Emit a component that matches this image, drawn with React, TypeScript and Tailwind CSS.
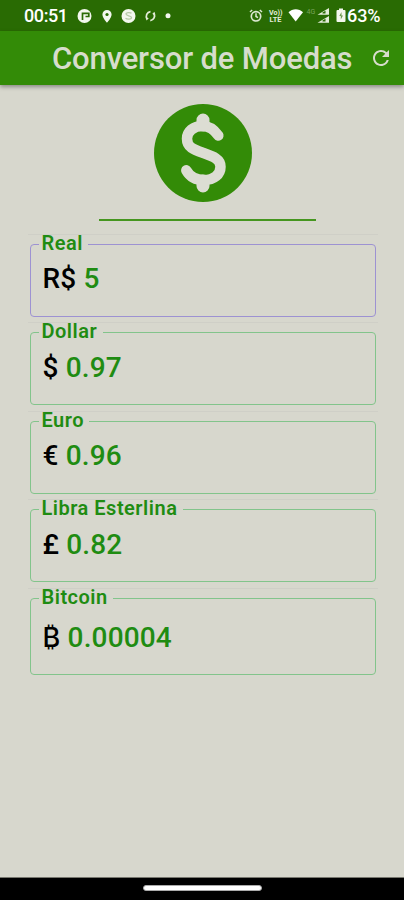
import React from "react";

type Currency = {
  label: string;
  symbol: string;
  symbolStyle: string;
  value: string;
  legendWidth: string;
  wrap: string;
  box: string;
  row: string;
};

const currencies: Currency[] = [
  { label: "Real", symbol: "R$", symbolStyle: "", value: "5", legendWidth: "w-[49px]", wrap: "", box: "h-[82px] border-[#9d92d2]", row: "pt-[7px]" },
  { label: "Dollar", symbol: "$", symbolStyle: "", value: "0.97", legendWidth: "w-[64px]", wrap: "mt-[5px]", box: "h-[82px] border-[#82c48b]", row: "pt-[8px]" },
  { label: "Euro", symbol: "€", symbolStyle: "", value: "0.96", legendWidth: "w-[50px]", wrap: "mt-[6px]", box: "h-[82px] border-[#82c48b]", row: "pt-[7px]" },
  { label: "Libra Esterlina", symbol: "£", symbolStyle: "", value: "0.82", legendWidth: "w-[144px]", wrap: "mt-[5px]", box: "h-[82px] border-[#82c48b]", row: "pt-[8px]" },
  { label: "Bitcoin", symbol: "₿", symbolStyle: "inline-block w-[18px] font-[Inter,sans-serif] text-[27px]", value: "0.00004", legendWidth: "w-[74px]", wrap: "mt-[6px]", box: "h-[86px] border-[#82c48b]", row: "pt-[12px]" },
];

function LeftStatusIcons() {
  return (
    <svg className="ml-[9px] h-[20px] w-[98px]" viewBox="0 0 98 20" fill="none">
      <circle cx="7.500" cy="10" r="7" fill="#f3f7ee" />
      <path d="M5.500 14V7.300h6.300v3.200H8.500" stroke="#296b03" strokeWidth="1.700" />
      <path d="M30 4a4.600 4.600 0 0 0-4.600 4.600c0 3.400 4.600 8.200 4.600 8.200s4.600-4.800 4.600-8.200A4.600 4.600 0 0 0 30 4z" fill="#f3f7ee" />
      <circle cx="30" cy="8.500" r="1.600" fill="#296b03" />
      <circle cx="51.500" cy="10" r="7" fill="#f3f7ee" />
      <path d="M54.500 7.300c-1-1-5.500-1.200-5.500.8s5.500 1.400 5.500 3.500-4.500 1.900-6 .7" stroke="#b5c9a7" strokeWidth="1.300" />
      <path d="M73.500 5.700a4.600 4.600 0 0 0-3.300 7.300M73.300 14.600a4.600 4.600 0 0 0 3.400-7.200" stroke="#e4edda" strokeWidth="1.700" />
      <path d="m68.500 11.500 3.300.7-2.200 2.200zM78.500 8.700l-3.300-.7 2.200-2.200z" fill="#e4edda" />
      <circle cx="91" cy="9.700" r="2.500" fill="#f3f7ee" />
    </svg>
  );
}

function RightStatusIcons() {
  return (
    <svg className="h-[20px] w-[98px]" viewBox="249 6 98 20" fill="none">
      <circle cx="256" cy="16.300" r="4.700" stroke="#dce8d1" strokeWidth="1.700" />
      <path d="M256 13.300v3.200l2 1.200M250 12l2.200-2M262 12l-2.200-2" stroke="#dce8d1" strokeWidth="1.500" />
      <text x="269" y="14.800" fontFamily="Roboto, sans-serif" fontSize="6.500" fontWeight="700" fill="#e4edda" textLength="13.500" lengthAdjust="spacingAndGlyphs">Vo))</text>
      <text x="269.500" y="21.500" fontFamily="Roboto, sans-serif" fontSize="6.500" fontWeight="700" fill="#e4edda" textLength="12" lengthAdjust="spacingAndGlyphs">LTE</text>
      <path d="M288.500 12.200c4-4 10.500-4 14.500 0L295.700 21.500z" fill="#fff" />
      <text x="306.500" y="13.500" fontFamily="Roboto, sans-serif" fontSize="7" fill="#78a35d">4G</text>
      <path d="M317.500 14.800 329 8v6.800zM317.500 22.800 329 16v6.800z" fill="#e4edda" />
      <path d="M322.500 13.600v-1l3-1.800v2.800zM322.500 21.600v-1l3-1.800v2.800z" fill="#296b03" />
      <path d="M339 8.500h4V10h1.500q1 0 1 1v10q0 1-1 1h-7q-1 0-1-1V11q0-1 1-1h1.500z" fill="#f3f7ee" />
      <path d="m341.500 12-2.200 4h1.500v3.500l2.200-4h-1.500z" fill="#6b9850" />
    </svg>
  );
}

function DollarCoin() {
  return (
    <svg className="ml-px h-[98px] w-[98px]" viewBox="0 0 98 98" fill="none" strokeLinecap="round" strokeLinejoin="round">
      <circle cx="49" cy="49" r="49" fill="#338b07" />
      <path
        d="M64.300 31.500C59.500 24.700 54 22 48.500 22C39.500 22 33 27.500 33 34.700C33 43.500 40 45.700 49.500 49C59.500 52.500 66.500 55 66.500 62.700C66.500 70.500 60 76 50 76C41.500 76 35.800 72.500 32.300 66.300"
        stroke="#dcddd3"
        strokeWidth="10.500"
      />
      <path d="M49 16v5M49 77v5" stroke="#dcddd3" strokeWidth="13" />
    </svg>
  );
}

function CurrencyField({ item }: { item: Currency }) {
  return (
    <div className={`border-t border-[#cfcfc7] ${item.wrap}`}>
      <fieldset className={`mx-0.5 w-[346px] rounded-[4px] border-[1.5px] pl-[8px] ${item.box}`}>
        <legend className={`whitespace-nowrap pb-[2px] pl-[3px] text-[20px] leading-[16px] font-semibold tracking-[0.5px] text-[#1f8c12] ${item.legendWidth}`}>
          {item.label}
        </legend>
        <div className={`pl-[4px] text-[28px] leading-[38px] font-medium tracking-[0.15px] whitespace-pre ${item.row}`}>
          <span className={`text-black ${item.symbolStyle}`}>{item.symbol}</span>
          <span className="text-[#1f8c12]"> {item.value}</span>
        </div>
      </fieldset>
    </div>
  );
}

export default function App() {
  return (
    <div className="flex h-[900px] w-[404px] flex-col overflow-hidden bg-[#d7d7cd] font-[Roboto,sans-serif]">
      <div className="flex h-[31px] shrink-0 items-center bg-[#296b03] pl-[24px] pr-[22px] text-white">
        <span className="w-[44px] text-[18px] font-medium tracking-[-0.4px]">00:51</span>
        <LeftStatusIcons />
        <div className="ml-auto flex items-center">
          <RightStatusIcons />
          <span className="w-[35px] text-[18px] font-medium tracking-[-0.1px]">63%</span>
        </div>
      </div>

      <header className="z-10 flex h-[54px] shrink-0 items-center justify-between bg-[#338b07] pl-[52px] pr-[11px] shadow-[0_2px_4px_rgba(0,0,0,0.35)]">
        <h1 className="pt-px text-[31px] leading-[54px] font-medium tracking-[-0.15px] whitespace-nowrap text-[#d7ddcc]">Conversor de Moedas</h1>
        <svg className="h-[24px] w-[24px]" viewBox="0 0 24 24" fill="#d7ddcc">
          <path d="M17.650 6.350A7.958 7.958 0 0 0 12 4c-4.420 0-7.990 3.580-7.990 8s3.570 8 7.990 8c3.730 0 6.840-2.550 7.730-6h-2.080A5.990 5.990 0 0 1 12 18c-3.310 0-6-2.690-6-6s2.690-6 6-6c1.660 0 3.140.69 4.220 1.780L13 11h7V4l-2.350 2.350z" />
        </svg>
      </header>

      <main className="flex flex-1 flex-col items-center pt-[19px]">
        <DollarCoin />
        <div className="ml-[11px] mt-[16.500px] h-[2px] w-[217px] bg-[#45961f]" />
        <section className="ml-px mt-[13.500px] w-[350px]">
          {currencies.map((item) => (
            <CurrencyField key={item.label} item={item} />
          ))}
        </section>
      </main>

      <div className="flex h-[23px] shrink-0 items-center justify-center border-t border-[#77776f] bg-black pb-[2px]">
        <div className="h-[6px] w-[119px] rounded-full border border-[#aaa] bg-white" />
      </div>
    </div>
  );
}
